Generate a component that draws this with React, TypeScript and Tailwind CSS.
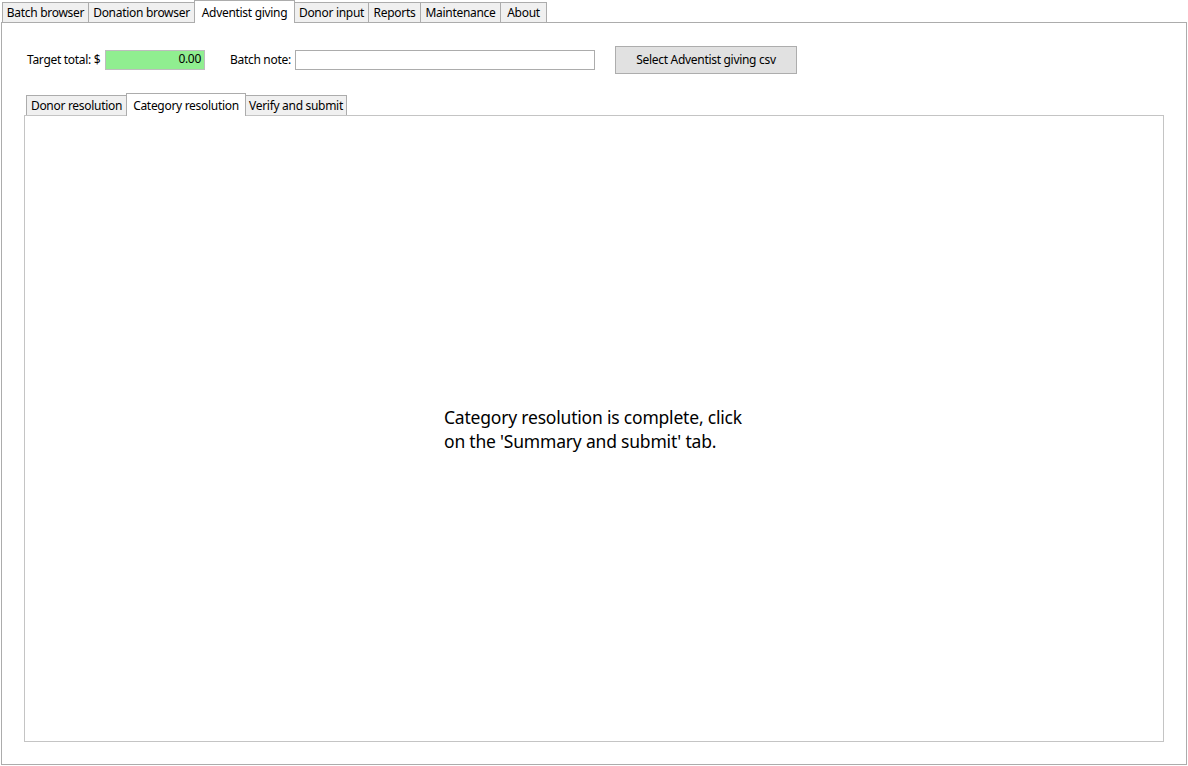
import React from "react";

const topTabs = [
  { label: "Batch browser", w: 87 },
  { label: "Donation browser", w: 106 },
  { label: "Adventist giving", w: 101, active: true },
  { label: "Donor input", w: 75 },
  { label: "Reports", w: 52 },
  { label: "Maintenance", w: 80 },
  { label: "About", w: 46 },
];

const innerTabs = [
  { label: "Donor resolution", w: 101 },
  { label: "Category resolution", w: 120, active: true },
  { label: "Verify and submit", w: 102 },
];

function Tab({ label, w, active }: { label: string; w: number; active?: boolean }) {
  if (active) {
    return (
      <div
        style={{ width: w }}
        className="relative z-10 -mx-[1px] flex h-[23px] items-start justify-center whitespace-nowrap border border-b-0 border-[#acacac] bg-white pt-[3px] text-[12px] tracking-[-0.3px] text-black"
      >
        {label}
      </div>
    );
  }
  return (
    <div
      style={{ width: w }}
      className="mt-[2px] flex h-[21px] items-center justify-center whitespace-nowrap border border-[#acacac] bg-[#f0f0f0] text-[12px] tracking-[-0.3px] text-black [&+&]:border-l-0"
    >
      {label}
    </div>
  );
}

export default function App() {
  return (
    <div
      className="flex h-[766px] w-[1188px] flex-col bg-white"
      style={{ fontFamily: '"Segoe UI", "Noto Sans", "Liberation Sans", sans-serif' }}
    >
      <div className="flex h-[23px] items-start pl-[2px]">
        {topTabs.map((t) => (
          <Tab key={t.label} {...t} />
        ))}
      </div>
      <div className="-mt-[1px] mb-[1px] ml-[1px] mr-[1px] flex flex-1 flex-col border border-[#acacac] bg-white">
        <div className="flex h-[70px] items-center whitespace-nowrap pt-[3px] text-[12px] tracking-[-0.3px]">
          <span className="ml-[25px] w-[78px]">Target total: $</span>
          <div className="flex h-[20px] w-[100px] items-center justify-end border border-[#bdbdbd] bg-[#90ee90] pr-[3px] pb-[1px]">
            0.00
          </div>
          <span className="ml-[25px] w-[65px]">Batch note:</span>
          <div className="h-[20px] w-[300px] border border-[#acacac] bg-white" />
          <button className="ml-[20px] flex h-[28px] w-[182px] items-center justify-center border border-[#adadad] bg-[#e1e1e1] text-[12px]">
            Select Adventist giving csv
          </button>
        </div>
        <div className="flex h-[23px] items-start pl-[24px]">
          {innerTabs.map((t) => (
            <Tab key={t.label} {...t} />
          ))}
        </div>
        <div className="-mt-[1px] mb-[22px] ml-[22px] mr-[22px] flex flex-1 items-center justify-center border border-[#c4c4c4] bg-white">
          <p className="ml-[20px] mt-[1px] w-[320px] whitespace-nowrap text-[17.5px] leading-[24px] tracking-[-0.2px] text-black">
            Category resolution is complete, click
            <br />
            on the 'Summary and submit' tab.
          </p>
        </div>
      </div>
    </div>
  );
}
